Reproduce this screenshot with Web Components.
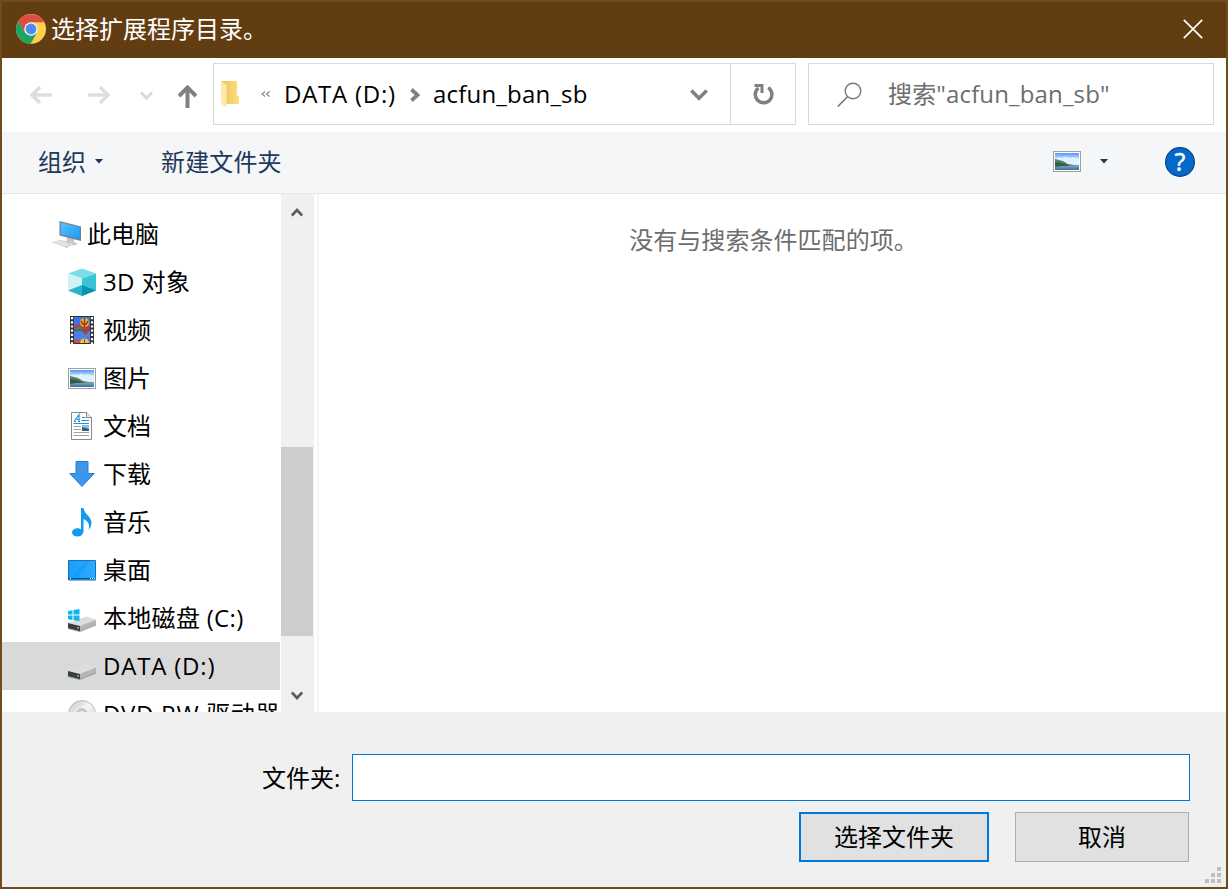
<!DOCTYPE html>
<html lang="zh-CN">
<head>
<meta charset="utf-8">
<title>选择扩展程序目录。</title>
<style>
html,body{margin:0;height:100%;overflow:hidden}
body{font:24px/32px "Open Sans","Noto Sans CJK SC",sans-serif;color:#000;background:#6f4c20}
</style>
</head>
<body>
<folder-dialog></folder-dialog>
<script>
const picture = (id) => `<defs><linearGradient id="sky${id}" x1="0" y1="0" x2="0" y2="1"><stop offset="0" stop-color="#5495f5"/><stop offset=".5" stop-color="#c9e6fd"/><stop offset="1" stop-color="#d9eefd"/></linearGradient><linearGradient id="sea${id}" x1="0" y1="0" x2="0" y2="1"><stop offset="0" stop-color="#86aebd"/><stop offset="1" stop-color="#3c6f9d"/></linearGradient></defs>
<rect x=".5" y=".5" width="27" height="20" fill="#fff" stroke="#a0a0a0"/><rect x="2" y="2" width="24" height="12" fill="url(#sky${id})"/><path d="M2 8q4-3 7-1 4-3 7 0 4-2 10 1v5H2z" fill="#e6f4ff" opacity=".8"/><rect x="2" y="14" width="24" height="5" fill="url(#sea${id})"/><path d="M2 8l4 1 4 1 5 3 6 1 5 .5H2z" fill="#568064"/><path d="M2 11l7 1 5 2 3 1H8l-6 1z" fill="#315e4c"/>`;

const drive = `<path d="M1 8L19 1.500l10 3L13 11z" fill="#dcdddf"/><path d="M1 8l12 3v5.500L1 13.500z" fill="#3b3d3e"/><path d="M13 11l16-6.500V10l-16 6.500z" fill="#b4b5b7"/><path d="M1 13.500l12 3L29 10" fill="none" stroke="#929496" stroke-width=".8"/><rect x="10" y="12" width="2" height="1.500" fill="#4be04b"/>`;

const icons = {
chrome:[30,30,`<circle cx="15" cy="15" r="15" fill="#fdd04d"/><path d="M2 7.500A15 15 0 0 1 28 8.200H15L8.800 18.500z" fill="#dc4e41"/><path d="M2 7.500L8.900 18.500 15 21.800 21 18.500 14.500 30A15 15 0 0 1 2 7.500z" fill="#1da462"/><circle cx="15" cy="15" r="6.800" fill="#f1f1f1"/><circle cx="15" cy="15" r="5.400" fill="#4b8bf4"/>`],
close:[20,20,`<path d="M.8.800l18.400 18.400M19.200.800L.8 19.200" stroke="#fff" stroke-width="1.700"/>`],
back:[22,18,`<path d="M10 1L2 9l8 8M2.500 9H22" fill="none" stroke="#dedede" stroke-width="3.500"/>`],
forward:[22,18,`<path d="M12 1l8 8-8 8M19.500 9H0" fill="none" stroke="#dedede" stroke-width="3.500"/>`],
recent:[13,9,`<path d="M1 1.500l5.500 5.500L12 1.500" fill="none" stroke="#dadada" stroke-width="3"/>`],
up:[19,23,`<path d="M1 11l8.500-8.500L18 11M9.500 3v20" fill="none" stroke="#808080" stroke-width="4"/>`],
folder:[19,28,`<defs><linearGradient id="f"><stop offset="0" stop-color="#e6c45e"/><stop offset="1" stop-color="#ffde7c"/></linearGradient></defs><path d="M0 1h16v14l2 1v8H1z" fill="url(#f)"/><path d="M0 1l5.500 4v22.500L.5 24z" fill="#ffe9a5"/>`],
quotes:[9,6,`<path d="M4 .5L1 3l3 2.500M8.500.5l-3 2.500 3 2.500" fill="none" stroke="#808080" stroke-width="1.100"/>`],
crumb:[10,14,`<path d="M1.500 1.500L7.500 7l-6 5.500" fill="none" stroke="#808080" stroke-width="3.800"/>`],
down:[18,12,`<path d="M1.300 1.500L9 9.200l7.700-7.700" fill="none" stroke="#808080" stroke-width="3.500"/>`],
refresh:[21,22,`<path d="M15.200 3.600A8.300 8.300 0 1 1 5.400 4" fill="none" stroke="#808080" stroke-width="3.500"/><path d="M1.500 1.500H9V9" fill="none" stroke="#808080" stroke-width="3"/>`],
search:[25,25,`<circle cx="16" cy="9" r="7.800" fill="none" stroke="#777" stroke-width="1.400"/><path d="M10.500 14.800L.8 24.500" stroke="#777" stroke-width="1.600"/>`],
caret:[8,5,`<path d="M0 0h8L4 4.500z" fill="#1a3360"/>`],
help:[30,30,`<circle cx="15" cy="15" r="14.400" fill="#0569cb" stroke="#0a4688" stroke-width="1.200"/>`],
scrollup:[12,10,`<path d="M.8 8.500L6 3l5.200 5.500" fill="none" stroke="#5c5c5c" stroke-width="2.700"/>`],
scrolldown:[12,10,`<path d="M.8 1.500L6 7l5.200-5.500" fill="none" stroke="#5c5c5c" stroke-width="2.700"/>`],
view:[28,21,picture('a')],
pc:[30,28,`<defs><linearGradient id="pc" x2="1" y2="1"><stop offset="0" stop-color="#5bc0ff"/><stop offset="1" stop-color="#189bf5"/></linearGradient></defs><path d="M16 17l7 2v3l4 2-4 1.500-8-3z" fill="#c5c9cb"/><path d="M8.500 1L30 6.500v14.500L8.500 15.500z" fill="#6f818c"/><path d="M9.800 2.500L28.800 7v12L9.800 14.500z" fill="url(#pc)"/><path d="M0 22l10-2 13 4-7 4z" fill="#c6cacc"/><path d="M3 21.500l15 5M6 21l14 4.500M2 23l12-2.500M6 24.500l10-2.500M10 26l11-2.500" stroke="#f5f5f5" stroke-width=".7"/>`],
cube:[28,28,`<path d="M0 5.500L14 .5l14 5-14 5z" fill="#7ddde6"/><path d="M0 5.500l14 5V28L0 22.500z" fill="#d0f2f5"/><path d="M14 10.500l14-5v17L14 28z" fill="#38c3d6"/><path d="M0 22.500L14 17v11z" fill="#27b4c9"/><path d="M14 17l14 5.500L14 28z" fill="#0894b4"/>`],
video:[24,28,`<path d="M0 0h24v28H0z" fill="#333"/><path d="M4 1h16v12.500H4z" fill="#3875e8"/><path d="M4 14.500h16V27H4z" fill="#4881e8"/><path d="M4 11l4-3 4 3 8-1v3.500H4z" fill="#d93429"/><circle cx="14.500" cy="6.500" r="4.500" fill="#f0b429"/><path d="M14.500 2v9M11 5c2 5 5 5 7 0" fill="none" stroke="#963e16" stroke-width="1.500"/><path d="M4 12l5-1 5 2.500H4z" fill="#31945a"/><path d="M12 14.500h7l-2.500 4h-2z" fill="#b6402d"/><path d="M4 25l3-2 4 3v1H4z" fill="#d94936"/><path d="M10 27a4.500 4.500 0 0 1 9 0z" fill="#f7c72f"/><path d="M14.500 23v4" stroke="#9b481b"/><path d="M2 1v27M22 1v27" stroke="#fff" stroke-width="2.200" stroke-dasharray="2.200 2"/>`],
image:[28,21,picture('b')],
doc:[22,28,`<path d="M.5.500h15l5 5v22H.5z" fill="#fff" stroke="#888"/><path d="M15.500.500v5h5" fill="#eee" stroke="#888"/><path d="M3 9.500L8 2.500v7M4.500 7.300H9M3 9.500h2M7 9.500h2M11 5.500h3.500M10.500 8.500H18M2.500 11.500H18" fill="none" stroke="#2b91d5" stroke-width="1.100"/><path d="M2.500 14.500H10M2.500 17.500H10M2.500 20.500H18M2.500 23.500H18" stroke="#a1a1a1"/><path d="M11 13h7v6h-7z" fill="#8dc2ed"/><path d="M11 15l4 1 3 1v2h-7z" fill="#345e78"/>`],
download:[26,26,`<path d="M7 .5h12v12h6.200L13 25.500.8 12.500H7z" fill="#3a97e9" stroke="#277fc9"/>`],
music:[20,29,`<path d="M9 0h2.500c1 7 8 8 8 15 0 3-1.400 5-3 7 2-6-1-9-5-11v13.500h-2.500z" fill="#0e9cf0"/><ellipse cx="5.500" cy="24.400" rx="5.500" ry="4.200" fill="#0e9cf0"/>`],
desktop:[28,21,`<defs><linearGradient id="desk" x2="1"><stop offset="0" stop-color="#179ffc"/><stop offset="1" stop-color="#2faaff"/></linearGradient></defs><path d="M.5.500h27v19.500H.5z" fill="url(#desk)" stroke="#1672b5"/><path d="M17 1L5 18h4L22 1z" fill="#0990ef" opacity=".3"/><path d="M1 18.500h26" stroke="#084e88"/><path d="M2 18.500h1M22 18.500h1M24 18.500h1M26 18.500h1" stroke="#fff"/>`],
disk:[30,28,`<g transform="translate(0 11)">${drive}</g>`],
windisk:[30,28,`<g transform="translate(0 11)">${drive}</g><path d="M1 7l4.500-.8v4.300H1zM6.500 6L12.500 5v5.500h-6zM1 11.500h4.500V16L1 15.300zM6.500 11.500h6V17l-6-.8z" fill="#12b6ee"/>`],
dvd:[28,28,`<defs><linearGradient id="dv" x2="1" y2="1"><stop offset="0" stop-color="#bcbfc1"/><stop offset=".45" stop-color="#f4f5f5"/><stop offset="1" stop-color="#badfc5"/></linearGradient></defs><circle cx="14" cy="14" r="13.500" fill="url(#dv)" stroke="#bbb"/><circle cx="14" cy="14" r="5" fill="#cfd1d2" stroke="#aaa"/><circle cx="14" cy="14" r="2.500" fill="#fff"/>`],
grip:[16,16,`<path d="M12 0h4v4h-4zM6 6h4v4H6zM12 6h4v4h-4zM0 12h4v4H0zM6 12h4v4H6zM12 12h4v4h-4z" fill="#bfbfbf"/>`]
};

const define = (name, render) => customElements.define(name, class extends HTMLElement {
  connectedCallback() {
    if (this.shadowRoot) return;
    const t = document.createElement('template');
    t.innerHTML = render(this);
    this.attachShadow({mode:'open'}).append(t.content.cloneNode(true));
  }
});

define('ui-icon', el => {
  const [w,h,body] = icons[el.getAttribute('name')];
  return `<style>:host{display:block;flex:none;width:${w}px;height:${h}px}svg{display:block}</style><svg width="${w}" height="${h}" viewBox="0 0 ${w} ${h}">${body}</svg>`;
});

define('title-bar', () => `<style>
:host{display:flex;align-items:center;height:56px;background:#633d12;color:#fff;padding:0 23px 2px 14px;box-sizing:border-box}
span{flex:1;margin-left:5px}</style>
<ui-icon name="chrome"></ui-icon><span><slot></slot></span><ui-icon name="close"></ui-icon>`);

define('nav-bar', () => `<style>
:host{display:flex;height:74px;background:#fff;box-sizing:border-box;padding:5px 12px 7px 28px}
.nav{display:flex;align-items:center;width:183px;padding-top:2px;box-sizing:border-box}
.nav :nth-child(2){margin-left:36px}.nav :nth-child(3){margin-left:31px}.nav :nth-child(4){margin:3px 0 0 25px}
.nav :nth-child(3){margin-left:30px}
.box{display:flex;align-items:center;border:1px solid #d9d9d9;box-sizing:border-box;height:62px}
.address{width:518px;padding-left:7px}
.data{margin-left:14px;letter-spacing:.75px;width:116px;white-space:nowrap}
.name{margin-left:13px;letter-spacing:.2px;flex:1}
.refresh{width:66px;margin-left:-1px;justify-content:center;padding:2px 0 0 1px}
.search{width:406px;margin-left:12px;padding-left:28px;color:#6d6d6d}
.search span{margin-left:26px;letter-spacing:.15px}
.quotes{margin:0 0 1px 21px}.crumb{margin:1px 0 0 10px}.down{margin:2px 22px 0 0}
</style>
<div class="nav"><ui-icon name="back"></ui-icon><ui-icon name="forward"></ui-icon><ui-icon name="recent"></ui-icon><ui-icon name="up"></ui-icon></div>
<div class="box address"><ui-icon name="folder"></ui-icon><ui-icon class="quotes" name="quotes"></ui-icon><span class="data">DATA (D:)</span><ui-icon class="crumb" name="crumb"></ui-icon><span class="name">acfun_ban_sb</span><ui-icon class="down" name="down"></ui-icon></div>
<div class="box refresh"><ui-icon name="refresh"></ui-icon></div>
<div class="box search"><ui-icon name="search"></ui-icon><span>搜索"acfun_ban_sb"</span></div>`);

define('tool-bar', () => `<style>
:host{display:flex;align-items:center;height:62px;box-sizing:border-box;background:#f4f6f8;border-bottom:1px solid #e5e8eb;padding:0 31px 2px 36px;color:#1e395b}
.new{margin-left:58px;flex:1;letter-spacing:.15px}.help{display:grid;margin-left:57px}.help>*{grid-area:1/1}
.help b{z-index:1;text-align:center;color:#fff;font:400 25px/29px "Noto Sans",sans-serif;-webkit-text-stroke:.4px #fff}
</style>
<span>组织</span><ui-icon name="caret" style="margin-left:9px"></ui-icon><span class="new">新建文件夹</span>
<ui-icon name="view"></ui-icon><ui-icon name="caret" style="margin-left:19px"></ui-icon><div class="help"><ui-icon name="help"></ui-icon><b>?</b></div>`);

define('tree-item', el => `<style>
:host{display:flex;height:48px;align-items:center;box-sizing:border-box;padding-left:65px;white-space:nowrap}
:host([root]){padding-left:49px}:host([selected]){background:#d9d9d9}
.i{width:30px;display:flex;justify-content:center;flex:none}
span{margin-left:6px;padding-bottom:1px;letter-spacing:${el.getAttribute('tracking') || 0}px}
</style><div class="i"><ui-icon name="${el.getAttribute('icon')}"></ui-icon></div><span><slot></slot></span>`);

define('scroll-bar', () => `<style>
:host{display:flex;flex-direction:column;align-items:center;width:33px;background:#f0f0f0;flex:none;box-sizing:border-box;padding:13px 0 11px}
.track{flex:1;align-self:stretch;padding-top:230px}.thumb{width:32px;height:189px;background:#cdcdcd}
ui-icon{margin-right:1px}
</style><ui-icon name="scrollup"></ui-icon><div class="track"><div class="thumb"></div></div><ui-icon name="scrolldown"></ui-icon>`);

define('dialog-button', () => `<style>
:host{display:flex;align-items:center;justify-content:center;height:50px;width:174px;box-sizing:border-box;background:#e1e1e1;border:1px solid #adadad}
:host([primary]){width:190px;border:2px solid #0078d7}
</style><span><slot></slot></span>`);

define('dialog-footer', () => `<style>
:host{display:block;background:#f0f0f0;height:175px;box-sizing:border-box;padding:42px 36px 0 260px;position:relative}
.row{display:flex;align-items:center}.row span{width:90px;padding-top:1px}
.input{flex:1;height:47px;box-sizing:border-box;border:1px solid #0078d7;background:#fff}
.actions{display:flex;justify-content:flex-end;gap:26px;margin:11px 1px 0 0}
.grip{position:absolute;right:5px;bottom:4px}
</style><div class="row"><span>文件夹:</span><div class="input"></div></div>
<div class="actions"><dialog-button primary>选择文件夹</dialog-button><dialog-button>取消</dialog-button></div><ui-icon class="grip" name="grip"></ui-icon>`);

define('folder-dialog', () => `<style>
:host{display:flex;flex-direction:column;width:1228px;height:889px;box-sizing:border-box;border:2px solid #6f4c20;background:#fff}
.main{display:flex;height:518px;overflow:hidden}
.tree{width:278px;padding-top:16px;box-sizing:border-box;overflow:hidden;margin-right:1px;flex:none}
.files{flex:1;margin-left:3px;border-left:2px solid #f5f5f5;text-align:center;color:#6d6d6d;padding:30px 0 0 2px;letter-spacing:.05px}
</style><title-bar>选择扩展程序目录。</title-bar><nav-bar></nav-bar><tool-bar></tool-bar>
<div class="main"><div class="tree">
<tree-item root icon="pc">此电脑</tree-item><tree-item icon="cube" tracking=".4">3D 对象</tree-item><tree-item icon="video">视频</tree-item><tree-item icon="image">图片</tree-item><tree-item icon="doc">文档</tree-item><tree-item icon="download">下载</tree-item><tree-item icon="music">音乐</tree-item><tree-item icon="desktop">桌面</tree-item><tree-item icon="windisk" tracking=".3">本地磁盘 (C:)</tree-item><tree-item selected icon="disk" tracking=".8">DATA (D:)</tree-item><tree-item icon="dvd" tracking=".65">DVD RW 驱动器</tree-item>
</div><scroll-bar></scroll-bar><div class="files">没有与搜索条件匹配的项。</div></div><dialog-footer></dialog-footer>`);
</script>
</body>
</html>
